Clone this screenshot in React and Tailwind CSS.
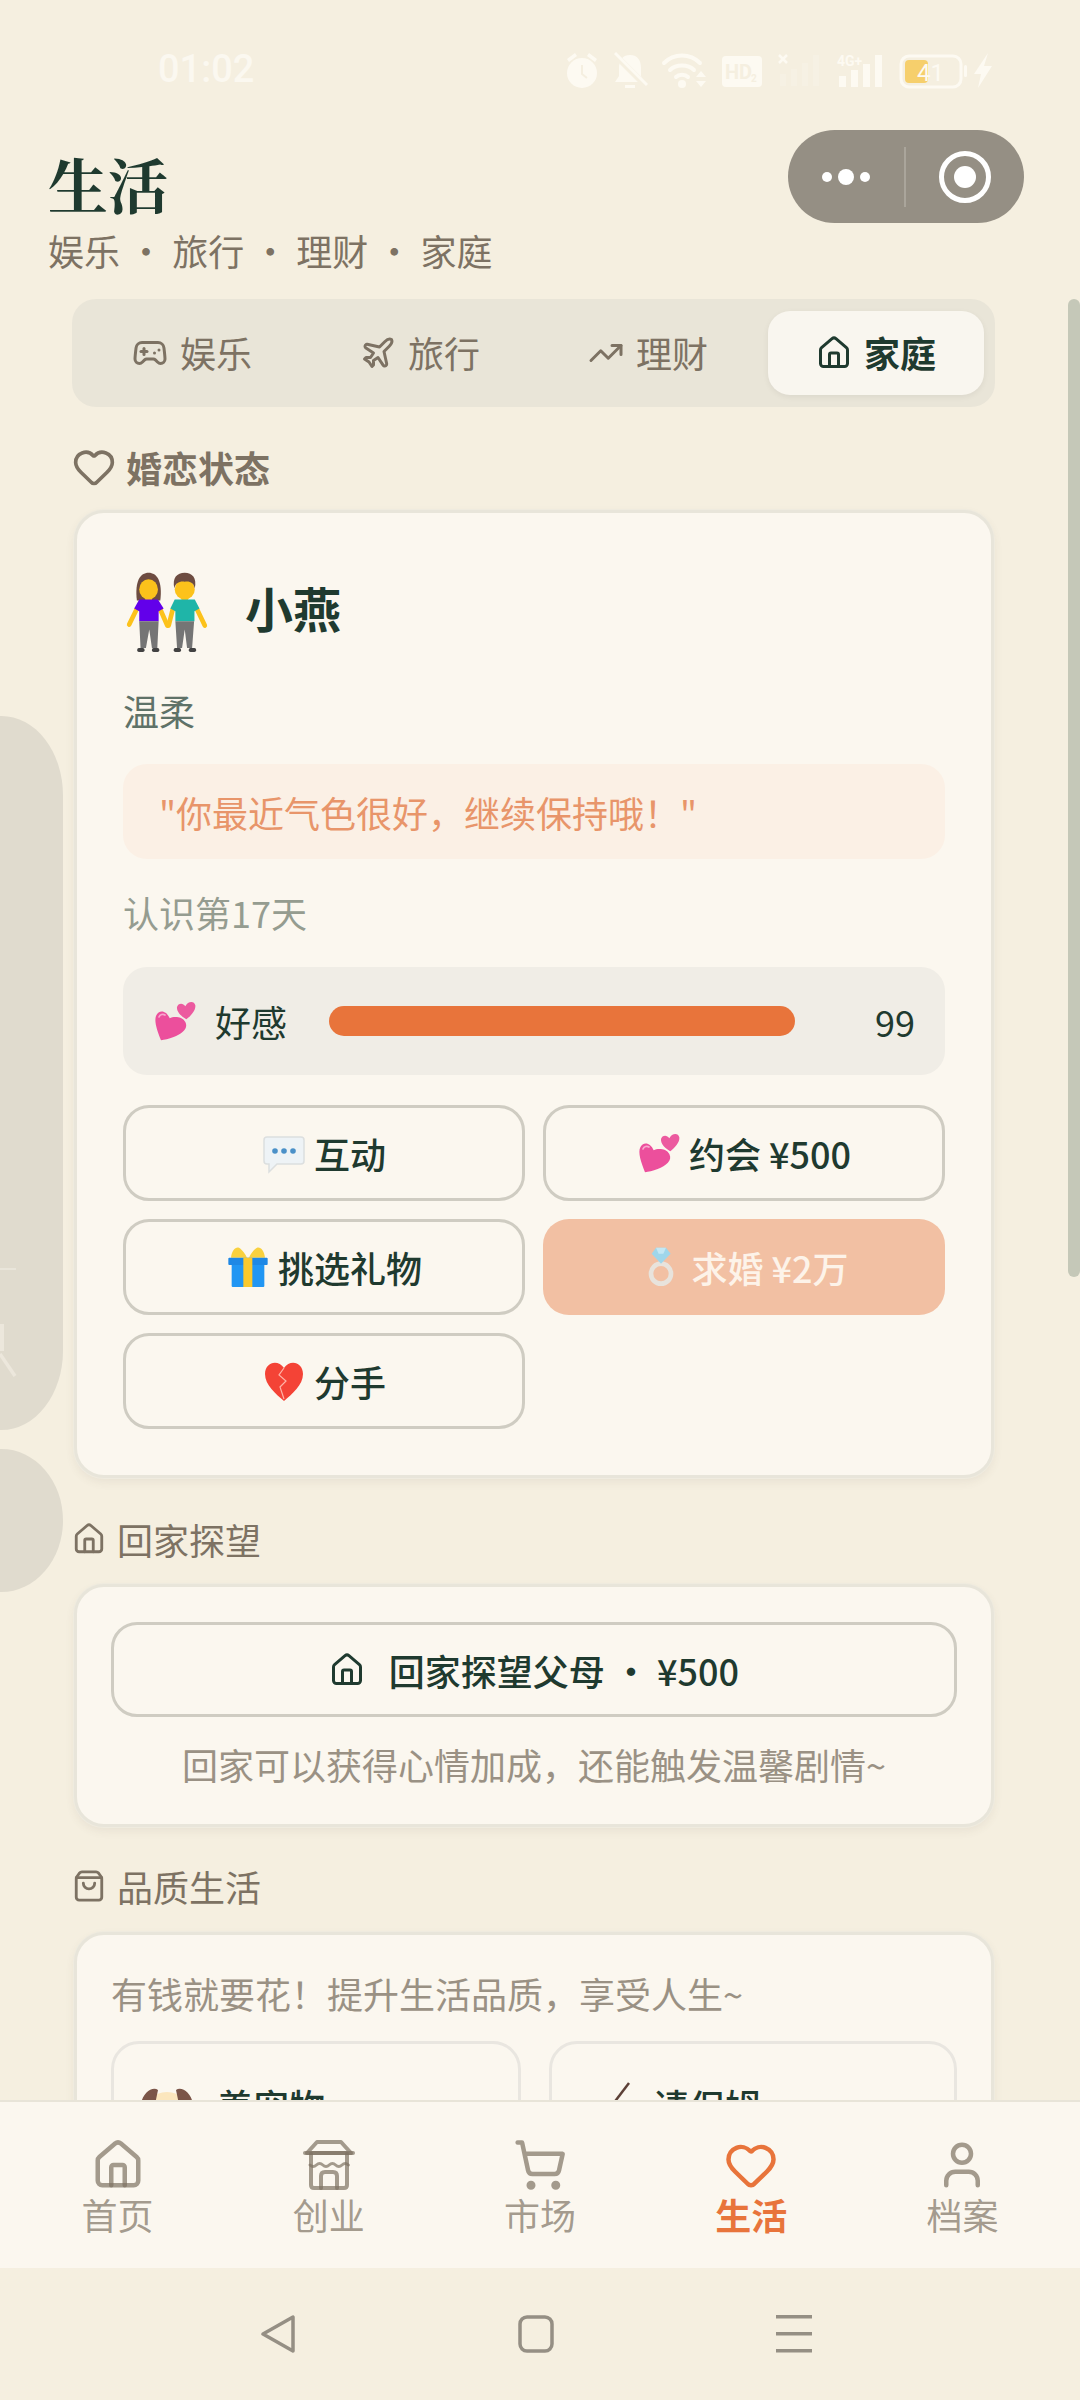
import React from 'react';
import { Gamepad2, Plane, TrendingUp, Home, Heart, ShoppingBag, ShoppingCart, User } from 'lucide-react';

const CJK = '"Noto Sans CJK SC","Noto Sans",sans-serif';

const Couple = () => (
  <svg width="84" height="82" viewBox="50 40 250 245" className="shrink-0 mt-[10px] ml-[2px]">
    <path d="M85 128 C78 70 95 45 120 45 C145 45 162 70 155 128 Z" fill="#6d4c41" />
    <g stroke="#fcc21b" strokeWidth="14" strokeLinecap="round" fill="none">
      <path d="M84 155 L62 200" />
      <path d="M155 155 L176 203" />
      <path d="M192 155 L180 203" />
      <path d="M265 155 L288 203" />
    </g>
    <rect x="110" y="115" width="20" height="16" fill="#fcc21b" />
    <ellipse cx="120" cy="95" rx="28" ry="30" fill="#fcc21b" />
    <path d="M92 125 H148 L165 152 L150 160 V190 H92 V160 L77 152 Z" fill="#6200ea" />
    <path d="M92 190 H150 L146 270 H130 L122 215 L112 270 H96Z" fill="#757575" />
    <rect x="86" y="270" width="22" height="12" rx="5" fill="#424242" />
    <rect x="130" y="270" width="22" height="12" rx="5" fill="#424242" />
    <rect x="218" y="115" width="20" height="16" fill="#fcc21b" />
    <ellipse cx="228" cy="95" rx="30" ry="30" fill="#fcc21b" />
    <path d="M197 92 C190 60 205 45 228 45 C250 45 265 60 258 92 C255 76 245 70 228 72 C212 70 200 76 197 92Z" fill="#6d4c41" />
    <path d="M198 125 H258 L272 152 L257 160 V190 H200 V160 L185 152 Z" fill="#1fb5a8" />
    <path d="M200 190 H256 L250 270 H235 L228 215 L220 270 H205 Z" fill="#757575" />
    <rect x="195" y="270" width="22" height="12" rx="5" fill="#424242" />
    <rect x="240" y="270" width="22" height="12" rx="5" fill="#424242" />
  </svg>
);

const TwoHearts = () => (
  <svg width="44" height="44" viewBox="38 36 132 132" className="shrink-0">
    <path d="M138 97 C125 90 108 75 110 60 C113 48 128 46 135 58 C142 42 162 40 165 55 C167 70 150 88 138 97Z" fill="#ec5a9f" />
    <path d="M62 160 C50 130 40 100 48 85 C55 68 78 68 88 94 C100 88 125 88 135 105 C145 125 125 140 100 150 C85 156 72 158 62 160Z" fill="#ec4f9c" />
    <path d="M56 90 C59 82 68 80 74 84" stroke="#f8a8cf" strokeWidth="5" fill="none" strokeLinecap="round" />
  </svg>
);

const Bubble = () => (
  <svg width="44" height="44" viewBox="0 0 44 44" className="shrink-0">
    <path d="M5 6 H39 Q42 6 42 9 V30 Q42 33 39 33 H15 L7 41 V33 H5 Q2 33 2 30 V9 Q2 6 5 6Z" fill="#eef3f6" stroke="#dcdfdf" strokeWidth="1.5" />
    <circle cx="13" cy="20" r="2.8" fill="#4a90c8" />
    <circle cx="22" cy="20" r="2.8" fill="#4a90c8" />
    <circle cx="31" cy="20" r="2.8" fill="#4a90c8" />
  </svg>
);

const Gift = () => (
  <svg width="44" height="44" viewBox="33 24 132 132" className="shrink-0">
    <path d="M48 62 C50 40 62 28 72 32 C82 38 92 52 96 62Z M150 62 C148 40 136 28 126 32 C116 38 106 52 102 62Z" fill="#f9d13e" />
    <rect x="50" y="80" width="98" height="70" rx="3" fill="#2196f3" />
    <rect x="40" y="62" width="118" height="22" rx="3" fill="#1e88e5" />
    <rect x="85" y="62" width="27" height="88" fill="#fbc92d" />
  </svg>
);

const Ring = () => (
  <svg width="44" height="44" viewBox="27 52 132 132" className="shrink-0">
    <circle cx="93" cy="138" r="30" fill="none" stroke="#e8e3dc" strokeWidth="14" />
    <path d="M78 60 H108 L122 78 L93 108 L65 78Z" fill="#9fd6ea" />
    <path d="M78 60 H108 L100 78 H86Z" fill="#c4e7f3" />
  </svg>
);

const Broken = () => (
  <svg width="44" height="44" viewBox="0 0 44 44" className="shrink-0">
    <path d="M22 9 C16 0 3 3 3 15 C3 26 14 35 22 42 C30 35 41 26 41 15 C41 3 28 0 22 9Z" fill="#f44336" />
    <path d="M22 9 L17 16 L24 22 L18 28 L22 40" stroke="#ffb3a7" strokeWidth="1.2" fill="none" />
  </svg>
);

const Dog = () => (
  <svg width="56" height="56" viewBox="0 0 56 56" className="shrink-0">
    <circle cx="28" cy="36" r="24" fill="#fbe6bd" />
    <path d="M2 24 C4 12 14 6 19 10 L14 34 C6 36 1 32 2 24Z M54 24 C52 12 42 6 37 10 L42 34 C50 36 55 32 54 24Z" fill="#7b5548" />
  </svg>
);

const Broom = () => (
  <svg width="56" height="56" viewBox="0 0 56 56" className="shrink-0">
    <path d="M54 3 L38 24" stroke="#5d4037" strokeWidth="2.5" />
    <path d="M34 20 L44 28 L30 50 L16 40Z" fill="#e0b46a" />
  </svg>
);

const StoreIcon = () => (
  <svg width="54" height="54" viewBox="0 0 54 54" fill="none" stroke="currentColor" strokeWidth="4" strokeLinecap="round" strokeLinejoin="round">
    <path d="M15 4 H39 L49 15 H5Z" />
    <path d="M3 15 H51" />
    <path d="M8 27 q3.2 3 6.4 0 t6.4 0 t6.4 0 t6.4 0 t6.4 0 t6.4 0" strokeWidth="3" />
    <path d="M9 16 V47 Q9 50 12 50 H42 Q45 50 45 47 V16" />
    <path d="M19 50 V38 Q19 34 23 34 H31 Q35 34 35 38 V50" />
  </svg>
);

const Section = ({ icon, bold, gap, children }) => (
  <div className={`flex items-center h-[36px] text-[#7d7263] text-[36px] leading-[36px] ${gap} ${bold ? 'font-bold' : ''}`}>
    {icon}
    <span>{children}</span>
  </div>
);

const ActionBtn = ({ icon, label, disabled }) => (
  <div className={`h-[96px] rounded-[26px] flex items-center justify-center gap-[8px] text-[36px] font-medium ${disabled ? 'bg-[#f2c0a3] text-[#fdf3e9]' : 'border-[3px] border-[#cfccc2] text-[#1f3a2f]'}`}>
    {icon}
    <span>{label}</span>
  </div>
);

const Tab = ({ Icon, label, active }) => (
  <div className={`flex-1 h-[84px] rounded-[22px] flex items-center justify-center gap-[12px] text-[36px] ${active ? 'bg-[#f9f6ef] text-[#1f3a2f] font-bold shadow-[0_2px_6px_rgba(0,0,0,0.06)]' : 'text-[#7d7263]'}`}>
    <Icon size={36} strokeWidth={2} />
    <span className="-mt-[2px]">{label}</span>
  </div>
);

const NavItem = ({ icon, label, active }) => (
  <div className={`flex-1 flex flex-col items-center ${active ? 'text-[#e8743b] font-bold' : 'text-[#7d7263b3]'}`}>
    {icon}
    <span className="text-[36px] leading-[44px]">{label}</span>
  </div>
);

const StatusIcons = () => (
  <svg width="430" height="40" viewBox="0 0 430 40" className="shrink-0">
    <g fill="#fdfaf2">
      <circle cx="17" cy="23" r="15" />
      <path d="M2 9 L10 3 L12 6 L4 12Z M32 9 L24 3 L22 6 L30 12Z" />
      <path d="M17 15 V24 L22 28" stroke="#f5efe0" strokeWidth="2" fill="none" />
      <path d="M65 5 C73 5 76 11 76 18 L76 26 L80 32 H50 L54 26 V18 C54 11 57 5 65 5Z" />
      <path d="M49 4 L82 37" stroke="#f5efe0" strokeWidth="6" />
      <path d="M50 3 L82 35" stroke="#fdfaf2" strokeWidth="3" />
      <rect x="60" y="35" width="10" height="3" />
      <g fill="none" stroke="#fdfaf2" strokeWidth="4" strokeLinecap="round">
        <path d="M99 13 C109 3 125 3 135 13" />
        <path d="M105 20 C111 14 123 14 129 20" />
        <path d="M111 27 C114 24 120 24 123 27" />
      </g>
      <circle cx="117" cy="34" r="4" />
      <path d="M131 27 l5 -6 l5 6z M131 31 l5 6 l5 -6z" />
      <rect x="157" y="6" width="40" height="31" rx="4" />
      <text x="160" y="29" fontSize="20" fontWeight="700" fontFamily="Roboto" fill="#f5efe0">HD</text>
      <text x="186" y="32" fontSize="10" fontWeight="700" fontFamily="Roboto" fill="#f5efe0">2</text>
      <path d="M214 5 l8 8 M222 5 l-8 8" stroke="#fdfaf2" strokeWidth="2.5" />
      <g opacity="0.22">
        <rect x="215" y="24" width="6" height="12" />
        <rect x="226" y="19" width="6" height="17" />
        <rect x="237" y="13" width="6" height="23" />
        <rect x="248" y="5" width="6" height="31" />
      </g>
      <text x="272" y="16" fontSize="14" fontWeight="700" fontFamily="Roboto">4G+</text>
      <rect x="274" y="26" width="7" height="11" />
      <rect x="286" y="20" width="7" height="17" />
      <rect x="298" y="14" width="7" height="23" />
      <rect x="310" y="5" width="7" height="32" />
      <rect x="336" y="6" width="60" height="31" rx="8" fill="none" stroke="#fdfaf2" strokeWidth="3" />
      <rect x="340" y="10" width="23" height="23" rx="4" fill="#f6cf6c" />
      <text x="352" y="31" fontSize="24" fontFamily="Roboto">41</text>
      <rect x="399" y="15" width="3" height="12" rx="1.5" />
      <path d="M423 3 L409 24 H416 L413 38 L427 16 H419Z" />
    </g>
  </svg>
);

const cardCls = 'rounded-[30px] bg-[#fbf7ef] border-[3px] border-[#e8e5da] shadow-[0_0_0_1px_#efebdf,0_4px_10px_rgba(90,80,60,0.08)]';

export default function App() {
  return (
    <div className="relative w-[1080px] h-[2400px] overflow-hidden bg-[#f5efe0]" style={{ fontFamily: CJK }}>
      {/* status bar */}
      <div className="h-[130px] pl-[158px] pr-[85px] pt-[45px] flex items-start justify-between text-[#fbf8f0] text-[38px] leading-[48px]">
        <span className="font-['Roboto'] font-medium">01:02</span>
        <div className="mt-[5px]"><StatusIcons /></div>
      </div>

      {/* header */}
      <div className="px-[48px] flex justify-between items-start h-[169px]">
        <div className="pt-[17px]">
          <div className="text-[60px] leading-[72px] font-bold text-[#1f3a2f]" style={{ fontFamily: '"Noto Serif CJK SC","Noto Serif SC","Noto Sans CJK SC",serif' }}>生活</div>
          <div className="mt-[6px] text-[36px] leading-[50px] text-[#7d7263]">娱乐 · 旅行 · 理财 · 家庭</div>
        </div>
        <div className="mr-[8px] w-[236px] h-[93px] rounded-full bg-[#958f84] flex items-center">
          <div className="w-[116px] flex justify-center items-center gap-[6px]">
            <span className="w-[10px] h-[10px] rounded-full bg-white" />
            <span className="w-[16px] h-[16px] rounded-full bg-white" />
            <span className="w-[10px] h-[10px] rounded-full bg-white" />
          </div>
          <div className="w-[2px] h-[60px] bg-[#aaa59b]" />
          <div className="flex-1 flex justify-center">
            <div className="w-[52px] h-[52px] rounded-full border-[5px] border-white flex items-center justify-center">
              <span className="w-[22px] h-[22px] rounded-full bg-white" />
            </div>
          </div>
        </div>
      </div>

      {/* content */}
      <div className="ml-[72px] w-[923px] flex flex-col">
        <div className="h-[108px] rounded-[24px] bg-[#e9e5d8] flex items-center gap-[12px] pl-[12px] pr-[11px]">
          <Tab Icon={Gamepad2} label="娱乐" />
          <Tab Icon={Plane} label="旅行" />
          <Tab Icon={TrendingUp} label="理财" />
          <Tab Icon={Home} label="家庭" active />
        </div>

        <div className="mt-[42px]">
          <Section bold gap="gap-[10px]" icon={<Heart size={44} strokeWidth={2} />}>婚恋状态</Section>
        </div>

        <div className={`mt-[25px] ml-[2px] w-[920px] h-[968px] px-[46px] pt-[52px] ${cardCls}`}>
          <div className="flex items-center gap-[36px] h-[84px]">
            <Couple />
            <span className="text-[48px] font-bold text-[#1f3a2f]">小燕</span>
          </div>
          <div className="mt-[36px] text-[36px] leading-[50px] text-[#5f7268]">温柔</div>
          <div className="mt-[29px] h-[95px] rounded-[24px] bg-[#fbf0e5] flex items-center px-[36px] text-[36px] text-[#e8956a]">"你最近气色很好，继续保持哦！"</div>
          <div className="mt-[28px] text-[36px] leading-[50px] text-[#959c90]">认识第17天</div>
          <div className="mt-[30px] h-[108px] rounded-[24px] bg-[#f0ede6] flex items-center pl-[30px] pr-[30px] text-[#1f3a2f] text-[36px]">
            <TwoHearts />
            <span className="ml-[18px]">好感</span>
            <div className="ml-[42px] w-[466px] h-[30px] rounded-full bg-[#e8743b]" />
            <span className="ml-auto">99</span>
          </div>
          <div className="mt-[30px] grid grid-cols-2 gap-x-[18px] gap-y-[18px]">
            <ActionBtn icon={<Bubble />} label="互动" />
            <ActionBtn icon={<TwoHearts />} label="约会 ¥500" />
            <ActionBtn icon={<Gift />} label="挑选礼物" />
            <ActionBtn icon={<Ring />} label="求婚 ¥2万" disabled />
            <ActionBtn icon={<Broken />} label="分手" />
          </div>
        </div>

        <div className="mt-[43px]">
          <Section gap="gap-[11px]" icon={<Home size={34} strokeWidth={2} />}>回家探望</Section>
        </div>
        <div className={`mt-[27px] ml-[2px] w-[920px] h-[243px] px-[34px] pt-[35px] ${cardCls}`}>
          <div className="h-[95px] rounded-[26px] border-[3px] border-[#cfccc2] flex items-center justify-center gap-[24px] text-[36px] font-medium text-[#1f3a2f]">
            <Home size={36} strokeWidth={2} />
            <span>回家探望父母 · ¥500</span>
          </div>
          <div className="mt-[22px] text-center text-[36px] leading-[50px] text-[#9a9184]">回家可以获得心情加成，还能触发温馨剧情~</div>
        </div>

        <div className="mt-[41px]">
          <Section gap="gap-[11px]" icon={<ShoppingBag size={34} strokeWidth={2} />}>品质生活</Section>
        </div>
        <div className={`mt-[28px] ml-[2px] w-[920px] h-[400px] px-[34px] pt-[33px] ${cardCls}`}>
          <div className="text-[36px] leading-[50px] text-[#9a9184]">有钱就要花！提升生活品质，享受人生~</div>
          <div className="mt-[23px] flex gap-[28px]">
            <div className="flex-1 h-[200px] rounded-[28px] border-[3px] border-[#e9e6e0] flex items-start pl-[25px] pt-[36px] gap-[22px] text-[36px] font-medium text-[#1f3a2f]">
              <Dog /><span className="leading-[50px]">养宠物</span>
            </div>
            <div className="flex-1 h-[200px] rounded-[28px] border-[3px] border-[#e9e6e0] flex items-start pl-[23px] pt-[36px] gap-[22px] text-[36px] font-medium text-[#1f3a2f]">
              <Broom /><span className="leading-[50px]">请保姆</span>
            </div>
          </div>
        </div>
      </div>

      {/* scrollbar */}
      <div className="absolute right-0 top-[299px] w-[12px] h-[978px] rounded-t-[6px] rounded-b-[6px] bg-[#c5c8b8]" />

      {/* left floating shapes */}
      <div className="absolute left-[-60px] top-[716px] w-[123px] h-[714px] rounded-[62px/80px] bg-[#e0dbce]">
        <svg width="20" height="120" viewBox="0 0 20 120" className="absolute left-[60px] top-[550px]" fill="none">
          <path d="M0 3 H16" stroke="#e9e5da" strokeWidth="2" />
          <path d="M2 58 V85" stroke="#ece7dc" strokeWidth="4" />
          <path d="M0 88 L15 110" stroke="#ece7dc" strokeWidth="3.5" />
        </svg>
      </div>
      <div className="absolute left-[-60px] top-[1449px] w-[123px] h-[143px] rounded-[62px/72px] bg-[#e0dbce]" />

      {/* bottom nav */}
      <div className="absolute left-0 top-[2100px] w-[1080px] h-[168px] bg-[#fbf7ef] border-t-[2px] border-[#e8e4d8] flex px-[12px] pt-[36px]">
        <NavItem icon={<Home size={54} strokeWidth={2} />} label="首页" />
        <NavItem icon={<StoreIcon />} label="创业" />
        <NavItem icon={<ShoppingCart size={54} strokeWidth={2} />} label="市场" />
        <NavItem icon={<Heart size={54} strokeWidth={2} />} label="生活" active />
        <NavItem icon={<User size={54} strokeWidth={2} />} label="档案" />
      </div>

      {/* system nav */}
      <div className="absolute left-0 top-[2268px] w-[1080px] h-[132px] bg-[#f5efe0] flex items-start pl-[260px] pt-[47px] gap-[222px] text-[#958f84]">
        <svg width="36" height="38" viewBox="0 0 36 38" fill="none" stroke="currentColor" strokeWidth="3.5" strokeLinejoin="round">
          <path d="M33 2 V36 L3 19Z" />
        </svg>
        <svg width="36" height="38" viewBox="0 0 36 38" fill="none" stroke="currentColor" strokeWidth="3.5">
          <rect x="2" y="2" width="32" height="34" rx="7" />
        </svg>
        <svg width="36" height="38" viewBox="0 0 36 38" fill="currentColor">
          <rect x="0" y="0" width="36" height="3.5" />
          <rect x="0" y="17" width="36" height="3.5" />
          <rect x="0" y="34" width="36" height="3.5" />
        </svg>
      </div>
    </div>
  );
}
